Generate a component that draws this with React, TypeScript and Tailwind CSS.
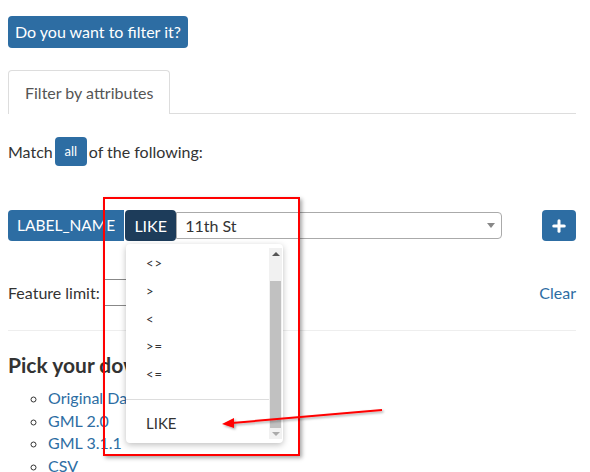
import { Plus } from 'lucide-react';

const ops = ['<>', '>', '<', '>=', '<='];
const links = ['Original Data', 'GML 2.0', 'GML 3.1.1', 'CSV'];

export default function App() {
  return (
    <div className="relative w-[590px] h-[472px] overflow-hidden bg-white font-['Lato',sans-serif] text-[#333]">
      <div className="w-[568px] ml-2 pt-4">
        <button className="h-8 px-[7px] rounded bg-[#2d6da3] text-white text-[16px]">
          Do you want to filter it?
        </button>

        {/* tabs */}
        <div className="mt-[22px] flex border-b border-[#ddd]">
          <div className="h-[44px] px-[16px] flex items-center border border-b-0 border-[#ddd] rounded-t bg-white -mb-px text-[16px] text-[#555]">
            Filter by attributes
          </div>
        </div>

        <div className="mt-[23px] flex items-center text-[16px] h-[29px]">
          <span>Match</span>
          <span className="mx-[2px] w-8 h-[29px] rounded bg-[#2d6da3] text-white text-[13px] flex items-end justify-center pb-[5px]">all</span>
          <span>of the following:</span>
        </div>

        {/* condition row */}
        <div className="mt-[44px] flex items-center h-[31px]">
          <div className="h-[31px] px-[9px] flex items-center rounded-l bg-[#2d6da3] text-white text-[15.5px]">LABEL_NAME</div>
          <div className="ml-px h-[31px] w-[51px] flex items-center justify-center rounded bg-[#1d3c5a] text-white text-[16px]">LIKE</div>
          <div className="w-[326px] h-[27px] flex items-center justify-between border border-[#aaa] rounded-r pl-2 pr-[6px] text-[16px]">
            <span>11th St</span>
            <span className="w-0 h-0 border-l-4 border-r-4 border-t-[5px] border-l-transparent border-r-transparent border-t-[#888]" />
          </div>
          <div className="flex-1" />
          <button className="w-[34px] h-[31px] rounded bg-[#2d6da3] text-white flex items-center justify-center">
            <Plus size={18} strokeWidth={4} />
          </button>
        </div>

        <div className="mt-[38px] flex items-center h-[27px] text-[16px]">
          <span>Feature limit:</span>
          <div className="ml-[3px] w-[120px] h-[27px] border border-[#888]" />
          <div className="flex-1" />
          <a className="text-[#2d6da3]">Clear</a>
        </div>

        <hr className="mt-[24px] border-[#eee]" />

        <div className="mt-[21px] text-[21px] font-bold leading-[26px]">Pick your download format:</div>
        <ul className="mt-[9px] pl-[40px] list-[circle] text-[16px] leading-[22.5px] text-[#2d6da3] marker:text-[#333]">
          {links.map((l) => (
            <li key={l}>{l}</li>
          ))}
        </ul>
      </div>

      {/* open dropdown */}
      <div className="absolute left-[126px] top-[244px] w-[157px] h-[199px] bg-white rounded shadow-[0_2px_6px_rgba(0,0,0,0.25)] flex">
        <div className="flex-1 flex flex-col text-[14px] text-[#333]">
          <div className="pt-[6px]">
            {ops.map((o) => (
              <div key={o} className="h-[27.7px] pl-5 flex items-center text-[13px] leading-none tracking-[1px]">{o}</div>
            ))}
          </div>
          <div className="mt-[11px] border-t border-[#ddd]" />
          <div className="pl-5 pt-[13px] text-[15px] leading-5">LIKE</div>
        </div>
        <div className="w-[13px] my-[4px] mr-[1px] bg-[#f1f1f1] flex flex-col items-center">
          <span className="mt-[4px] w-0 h-0 border-l-4 border-r-4 border-b-[4px] border-l-transparent border-r-transparent border-b-[#555]" />
          <div className="mt-[25px] w-[11px] h-[147px] bg-[#c1c1c1]" />
          <span className="mt-[4px] w-0 h-0 border-l-4 border-r-4 border-t-[4px] border-l-transparent border-r-transparent border-t-[#aaa]" />
        </div>
      </div>

      {/* annotation */}
      <div className="absolute left-[103px] top-[197px] w-[197px] h-[259px] border-2 border-[#f00] shadow-[2px_2px_4px_rgba(0,0,0,0.35)]" />
      <svg className="absolute left-0 top-0 pointer-events-none" width="590" height="472">
        <defs>
          <filter id="sh" x="-10%" y="-50%" width="120%" height="200%">
            <feDropShadow dx="1.5" dy="1.5" stdDeviation="1" floodColor="#000" floodOpacity="0.35" />
          </filter>
        </defs>
        <g filter="url(#sh)">
          <line x1="382" y1="410" x2="232" y2="423" stroke="#f00" strokeWidth="2" />
          <polygon points="222,424 234,418 234,428" fill="#f00" />
        </g>
      </svg>
    </div>
  );
}
